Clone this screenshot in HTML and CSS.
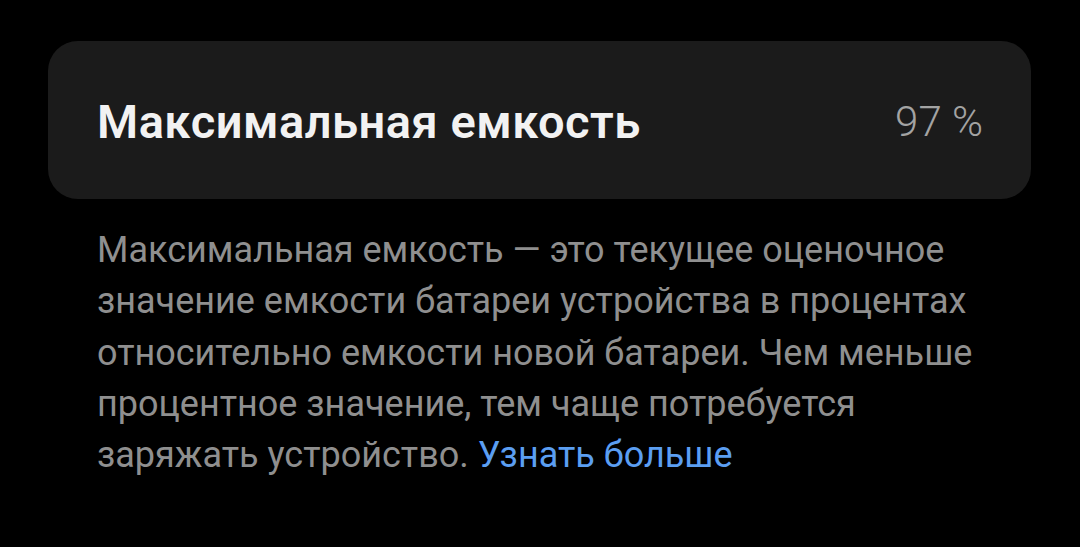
FILE: index.html
```html
<!DOCTYPE html>
<html lang="ru">
<head>
<meta charset="utf-8">
<link rel="stylesheet" href="styles.css">
</head>
<body>
<main class="page">
  <section class="card">
    <span class="card-title">Максимальная емкость</span>
    <span class="card-value">97 %</span>
  </section>
  <p class="desc">Максимальная емкость — это текущее оценочное значение емкости батареи устройства в процентах относительно емкости новой батареи. Чем меньше процентное значение, тем чаще потребуется заряжать устройство. <a class="link" href="#">Узнать больше</a></p>
</main>
</body>
</html>
```
FILE: styles.css
```css
html, body {
  margin: 0;
  padding: 0;
  background: #000;
  height: 100%;
}
.page {
  padding: 41px 49px 0 48px;
  font-family: Roboto, "Noto Sans", sans-serif;
}
.card {
  height: 158px;
  box-sizing: border-box;
  background: #1b1b1b;
  border-radius: 30px;
  display: flex;
  align-items: center;
  justify-content: space-between;
  padding: 2px 48px 0 49px;
}
.card-title {
  color: #f2f2f2;
  font-size: 47px;
  font-weight: 600;
  letter-spacing: 0.5px;
}
.card-value {
  color: #a3a3a3;
  font-size: 42px;
  font-weight: 300;
}
.desc {
  margin: 26px 0 0 49px;
  width: 890px;
  color: #8f8f8f;
  font-size: 36px;
  line-height: 51.3px;
}
.link {
  color: #5b9ef2;
  text-decoration: none;
}
```
